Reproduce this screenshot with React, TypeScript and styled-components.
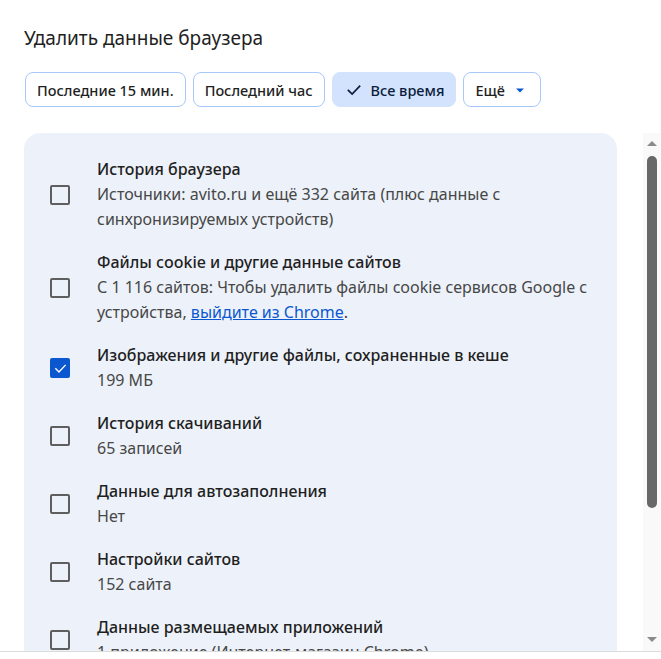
import React from "react";
import styled, { createGlobalStyle } from "styled-components";

const GlobalStyle = createGlobalStyle`
  html, body {
    margin: 0;
    padding: 0;
    background: #ffffff;
    font-family: "Noto Sans", "Open Sans", sans-serif;
    color: #1f1f1f;
  }
`;

const Page = styled.div`
  width: 661px;
  height: 659px;
  display: flex;
  flex-direction: column;
  overflow: hidden;
  background: #ffffff;
`;

const Header = styled.div`
  padding: 24px 0 0 24px;
`;

const Title = styled.h1`
  margin: 0;
  font-size: 19px;
  line-height: 28px;
  font-weight: 400;
  color: #1f1f1f;
`;

const ChipRow = styled.div`
  display: flex;
  gap: 7px;
  margin-top: 20px;
  margin-left: 1px;
`;

const Chip = styled.button<{ $selected?: boolean; $menu?: boolean }>`
  display: flex;
  align-items: center;
  gap: ${(p) => (p.$menu ? "6px" : "8px")};
  height: 35px;
  padding: 0 11px 0 ${(p) => (p.$selected ? "12px" : "11px")};
  border-radius: 8px;
  border: 1px solid ${(p) => (p.$selected ? "#d3e3fd" : "#a8c7fa")};
  background: ${(p) => (p.$selected ? "#d3e3fd" : "#ffffff")};
  color: ${(p) => (p.$selected ? "#0a1d3b" : "#1f1f1f")};
  font-family: inherit;
  font-size: 14.5px;
  font-weight: 500;
  cursor: pointer;
`;

const Body = styled.div`
  margin-top: 26px;
  height: 518px;
  display: flex;
  border-bottom: 1px solid #dcdcdc;
`;

const ScrollArea = styled.div`
  flex: 1;
  overflow: hidden;
  padding: 0 26px 0 24px;
`;

const Card = styled.div`
  background: #edf2fa;
  border-radius: 16px;
  padding: 15px 0 20px;
`;

const Row = styled.label`
  display: flex;
  align-items: center;
  padding: 9px 16px 9px 26px;
  cursor: pointer;
`;

const Box = styled.span<{ $checked?: boolean }>`
  flex: none;
  width: 16px;
  height: 16px;
  border-radius: 2px;
  border: 2px solid ${(p) => (p.$checked ? "#0b57d0" : "#5f5f5f")};
  background: ${(p) => (p.$checked ? "#0b57d0" : "transparent")};
  display: flex;
  align-items: center;
  justify-content: center;
  margin-right: 27px;
`;

const Texts = styled.div`
  display: flex;
  flex-direction: column;
  min-width: 0;
`;

const ItemTitle = styled.div`
  font-size: 16px;
  line-height: 25px;
  font-weight: 500;
  color: #1f1f1f;
`;

const ItemDesc = styled.div`
  font-size: 16px;
  line-height: 25px;
  color: #474747;
`;

const Link = styled.a`
  color: #0b57d0;
  text-decoration: underline;
`;

const Scrollbar = styled.div`
  flex: none;
  width: 17px;
  margin-right: 1px;
  background: #f9f9f9;
  display: flex;
  flex-direction: column;
  align-items: center;
`;

const Arrow = styled.div<{ $down?: boolean }>`
  width: 0;
  height: 0;
  border-left: 5px solid transparent;
  border-right: 5px solid transparent;
  ${(p) =>
    p.$down
      ? "border-top: 5px solid #8a8a8a; margin-top: auto; margin-bottom: 9px;"
      : "border-bottom: 5px solid #8a8a8a; margin-top: 8px;"}
`;

const Thumb = styled.div`
  width: 10px;
  height: 352px;
  margin-top: 10px;
  border-radius: 5px;
  background: #686868;
`;

const CheckIcon = ({ color, size }: { color: string; size: number }) => (
  <svg width={size} height={size} viewBox="0 0 24 24" fill="none">
    <path
      d="M4.5 12.5l5 5L19.5 7"
      stroke={color}
      strokeWidth="2.2"
      strokeLinecap="square"
    />
  </svg>
);

interface Item {
  title: string;
  desc: React.ReactNode;
  checked?: boolean;
}

const items: Item[] = [
  {
    title: "История браузера",
    desc: "Источники: avito.ru и ещё 332 сайта (плюс данные с синхронизируемых устройств)",
  },
  {
    title: "Файлы cookie и другие данные сайтов",
    desc: (
      <>
        С 1 116 сайтов: Чтобы удалить файлы cookie сервисов Google с
        устройства, <Link href="#">выйдите из Chrome</Link>.
      </>
    ),
  },
  {
    title: "Изображения и другие файлы, сохраненные в кеше",
    desc: "199 МБ",
    checked: true,
  },
  { title: "История скачиваний", desc: "65 записей" },
  { title: "Данные для автозаполнения", desc: "Нет" },
  { title: "Настройки сайтов", desc: "152 сайта" },
  {
    title: "Данные размещаемых приложений",
    desc: "1 приложение (Интернет-магазин Chrome)",
  },
];

const chips = ["Последние 15 мин.", "Последний час"];

export default function App() {
  return (
    <>
      <GlobalStyle />
      <Page>
        <Header>
          <Title>Удалить данные браузера</Title>
          <ChipRow>
            {chips.map((c) => (
              <Chip key={c}>{c}</Chip>
            ))}
            <Chip $selected>
              <CheckIcon color="#0a1d3b" size={18} />
              Все время
            </Chip>
            <Chip $menu>
              Ещё
              <svg width="18" height="18" viewBox="0 0 18 18">
                <path d="M5 7.5h8l-4 4z" fill="#0b57d0" />
              </svg>
            </Chip>
          </ChipRow>
        </Header>
        <Body>
          <ScrollArea>
            <Card>
              {items.map((item) => (
                <Row key={item.title}>
                  <Box $checked={item.checked}>
                    {item.checked && <CheckIcon color="#ffffff" size={15} />}
                  </Box>
                  <Texts>
                    <ItemTitle>{item.title}</ItemTitle>
                    <ItemDesc>{item.desc}</ItemDesc>
                  </Texts>
                </Row>
              ))}
            </Card>
          </ScrollArea>
          <Scrollbar>
            <Arrow />
            <Thumb />
            <Arrow $down />
          </Scrollbar>
        </Body>
      </Page>
    </>
  );
}
